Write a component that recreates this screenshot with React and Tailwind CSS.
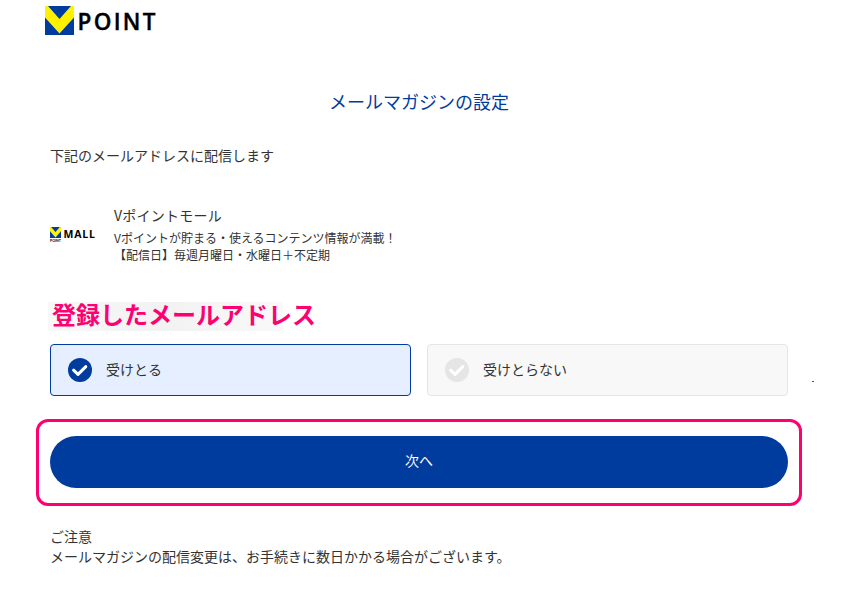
import clsx from "clsx";

const FONT = "font-['Noto_Sans_CJK_JP',sans-serif]";

function VMark(props) {
  return (
    <svg viewBox="0 0 29 29" aria-hidden="true" {...props}>
      <rect width="29" height="29" fill="#003c9e" />
      <path d="M0 0 H3 L14.5 13 L26 0 H29 V11.5 L14.5 27.5 L0 11.5 Z" fill="#fff100" />
    </svg>
  );
}

function Header() {
  return (
    <header className="flex h-[29px] mt-1.5 ml-[45px]">
      <VMark width="29" height="29" className="shrink-0" />
      <svg width="90" height="36" viewBox="0 0 90 36" className="shrink-0 overflow-visible" aria-label="POINT">
        <text
          x="3.5"
          y="23.5"
          textLength="78"
          lengthAdjust="spacing"
          className="font-['Open_Sans',sans-serif] font-semibold text-[22.5px]"
          stroke="#000"
          strokeWidth="0.4"
        >
          POINT
        </text>
      </svg>
    </header>
  );
}

function MallLogo() {
  return (
    <svg width="46" height="18" viewBox="0 0 46 18" className="shrink-0 overflow-visible" aria-label="V POINT MALL">
      <VMark width="11" height="11" />
      <text
        x="0"
        y="15"
        textLength="11"
        lengthAdjust="spacingAndGlyphs"
        className="font-['Lato',sans-serif] font-bold text-[4px]"
      >
        POINT
      </text>
      <text
        x="13.5"
        y="11"
        textLength="31.5"
        lengthAdjust="spacing"
        className="font-['Open_Sans',sans-serif] font-bold text-[10.5px]"
      >
        MALL
      </text>
    </svg>
  );
}

function Option({ label, selected }) {
  return (
    <button
      type="button"
      aria-pressed={selected}
      className={clsx(
        "flex flex-1 items-center h-[52px] rounded border pl-[17px] text-sm text-[#333]",
        selected ? "border-[#003c9e] bg-[#e5efff]" : "border-[#e5e5e5] bg-[#f8f8f8]",
      )}
    >
      <svg width="24" height="24" viewBox="0 0 24 24" fill="none" aria-hidden="true">
        <circle cx="12" cy="12" r="12" fill={selected ? "#003c9e" : "#e5e5e5"} />
        <path
          d="M5.6 12.2 L10 16.4 L17.8 8.6"
          stroke="#fff"
          strokeWidth="3"
          strokeLinecap="round"
          strokeLinejoin="round"
        />
      </svg>
      <span className="ml-3.5 pb-0.5">{label}</span>
    </button>
  );
}

export default function App() {
  return (
    <div className={clsx("flow-root relative w-[865px] h-[589px] overflow-hidden bg-white text-[#333]", FONT)}>
      <Header />

      <main className="ml-[50px] w-[738px]">
        <h1 className="mt-[52px] text-center text-lg leading-7 font-normal text-[#003c9e]">メールマガジンの設定</h1>
        <p className="mt-[30px] text-sm leading-5">下記のメールアドレスに配信します</p>

        <section className="flex items-center mt-[41px] h-[60px]">
          <MallLogo />
          <div className="ml-[18px] -mt-1 whitespace-nowrap">
            <h2 className="text-sm leading-5 mb-1 tracking-[0.25px]">Vポイントモール</h2>
            <p className="text-xs leading-[17px]">Vポイントが貯まる・使えるコンテンツ情報が満載！</p>
            <p className="text-xs leading-[17px]">【配信日】毎週月曜日・水曜日＋不定期</p>
          </div>
        </section>

        <div className="mt-9 -ml-0.5 w-[235px] h-[29px] bg-linear-to-r from-[#f8f8f8] via-[#f2f2f2] to-[#f9f9f9] pl-1">
          <p className="whitespace-nowrap text-2xl leading-6 font-bold text-[#ff0073]">登録したメールアドレス</p>
        </div>

        <div className="flex gap-4 mt-[13px]">
          <Option label="受けとる" selected />
          <Option label="受けとらない" selected={false} />
        </div>

        <div className="mt-[23px] -mx-3.5 h-[87px] rounded-xl border-3 border-[#ff0073] px-[11px] pt-3.5">
          <button type="button" className="block w-full h-[52px] rounded-full bg-[#003c9e] pb-1 text-sm text-white">
            次へ
          </button>
        </div>

        <div className="mt-5 text-sm leading-5">
          <p>ご注意</p>
          <p>メールマガジンの配信変更は、お手続きに数日かかる場合がございます。</p>
        </div>
      </main>

      <span className="absolute left-[812px] top-[381px] w-0.5 h-px bg-[#ff0073]" />
    </div>
  );
}
